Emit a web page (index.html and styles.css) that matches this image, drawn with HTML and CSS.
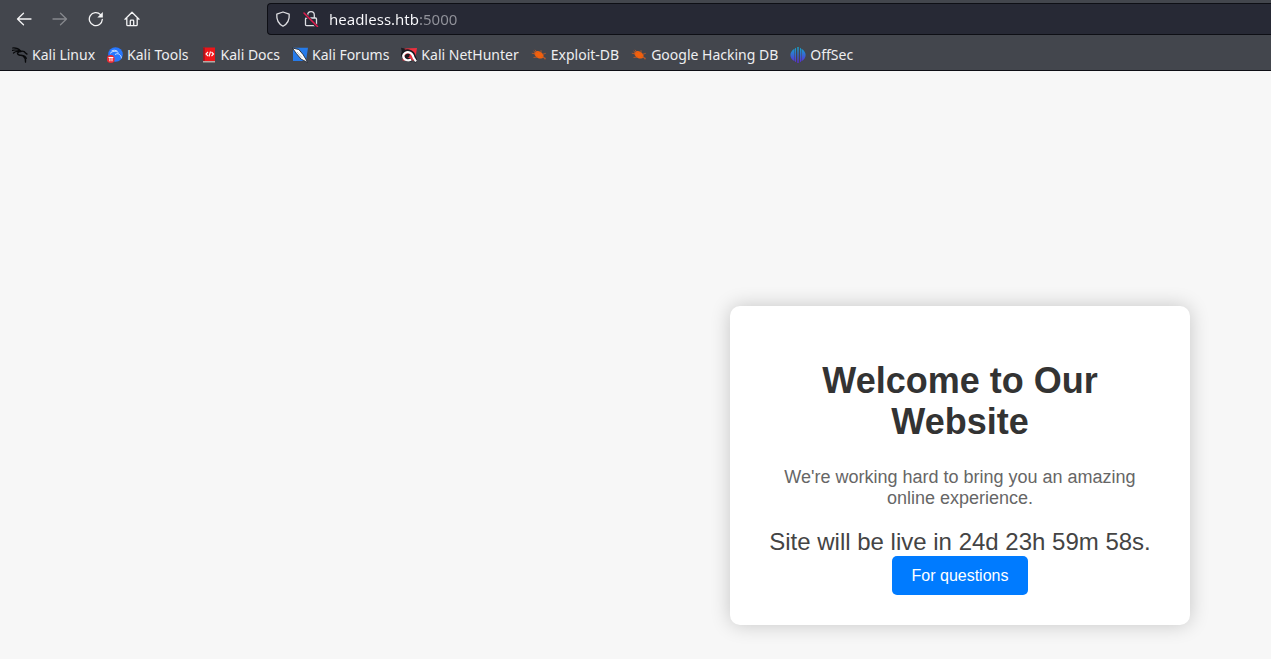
FILE: index.html
```html
<!DOCTYPE html>
<html lang="en">
<head>
<meta charset="utf-8">
<title>Under Construction</title>
<link rel="stylesheet" href="styles.css">
</head>
<body>
<header class="browser">
  <div class="toolbar">
    <div class="nav-buttons">
      <button class="nav-button" type="button" aria-label="Back"><svg viewBox="0 0 16 16"><path d="M15 8H1.5M7.500 2.200L1.500 8l6 5.800"/></svg></button>
      <button class="nav-button" type="button" aria-label="Forward" disabled><svg viewBox="0 0 16 16"><path d="M1 8h13.500M8.500 2.200l6 5.800-6 5.800"/></svg></button>
      <button class="nav-button" type="button" aria-label="Reload"><svg viewBox="0 0 16 16"><path d="M14.300 8.500A6.500 6.500 0 1 1 12.500 3.600"/><path class="solid" d="M14.800 1v5.500H9.300z"/></svg></button>
      <button class="nav-button" type="button" aria-label="Home"><svg viewBox="0 0 16 16"><path d="M1 8.300L8 1.300l7 7M2.800 7v6.700q0 1 1 1h8.400q1 0 1-1V7M6.300 14.500V10q0-.8.800-.8h1.800q.8 0 .8.800v4.500"/></svg></button>
    </div>
    <form class="address">
      <svg viewBox="0 0 16 16"><path d="M8 1l6.200 2.200c.4 5-1.200 9.300-6.200 12-5-2.700-6.600-7-6.200-12z"/></svg>
      <svg viewBox="0 0 16 16"><path d="M4.700 7V4a3.300 3.300 0 0 1 6.600 0v3M3.500 7h9q1 0 1 1v5.500q0 1.200-1.200 1.200H3.700q-1.200 0-1.200-1.200V8q0-1 1-1z"/><path class="gap" d="M1.500 2.500L14 15.500"/><path class="slash" d="M1 2l13.500 13.500"/></svg>
      <input class="address-input" type="text" aria-label="Address" value="headless.htb:5000">
    </form>
  </div>
  <nav class="bookmarks" aria-label="Bookmarks">
    <a class="bookmark" href="#"><svg viewBox="0 0 16 16"><g fill="none" stroke="#08090b" stroke-linecap="round"><path stroke-width="1.200" d="M.6 1c3.500-.3 6 .6 8 2.800M.4 3.400C3 2.500 5.500 3 8.500 4.300M1.500 6c1.500-1.300 3-1.700 5-1.500"/><path stroke-width="1.500" d="M9 4.500c-4 .2-4.400 2.800-1.800 3.400s6.300.2 7 3.600"/><path stroke-width="1.300" d="M9 4.300c2-.3 3.800.3 4.600 1.800l1.400 1M11.500 9.500c1.600 1.200 2.400 3 2 5.700"/></g></svg>Kali Linux</a>
    <a class="bookmark" href="#"><svg viewBox="0 0 16 16"><circle cx="8.500" cy="7.500" r="7.300" fill="#2777ff"/><path d="M3 6.500c2.500-2.500 5.500-3 8.500-.8M4.500 4c2-1 4-1 6 .3M8 7.500c2.500-1.500 4-.8 5.300.8 1 1.200 1 2 1.200 3" fill="none" stroke="#d5e6ff" stroke-width=".9"/><circle cx="3.800" cy="12" r="3.900" fill="#e92b33"/><path d="M1.500 10.500h4.800M2.900 10.500v3.800M5 10.500v3.800" stroke="#fff" fill="none"/></svg>Kali Tools</a>
    <a class="bookmark" href="#"><svg viewBox="0 0 16 16"><path d="M2 .5h12v13.700H2z" fill="#ee1519"/><path d="M2 .5h1.800v13.700H2z" fill="#9c1820"/><path d="M2 14h12v1.500H2z" fill="#b7aaa5"/><path d="M7 5L5 7l2 2M10.500 5l2 2-2 2M9.500 4.500L8 9.500" fill="none" stroke="#fff" stroke-width="1.100"/></svg>Kali Docs</a>
    <a class="bookmark" href="#"><svg viewBox="0 0 16 16"><path d="M1 .8h15L14 14H1z" fill="#267bea"/><path d="M.3 1l6.500 1.500 4.400 5.200L15.800 15.500l-6.600-3.300-4.700-5.500z" fill="#fff" stroke="#242831" stroke-width=".9"/><path d="M5 5l5 5.500" fill="none" stroke="#8b939b" stroke-width=".6"/></svg>Kali Forums</a>
    <a class="bookmark" href="#"><svg viewBox="0 0 16 16"><path d="M3 1.500L16 1l-2 12.500H1.500z" fill="#ed303e"/><path d="M0 .8l4.500 1L1 6z" fill="#1b1c22"/><path d="M8.500 8.500C6.500 8 4.500 9.300 5 11c.7 2 4 2.500 5.500 1.500" fill="none" stroke="#181a20" stroke-width="3.600"/><path d="M1 9.500C1.500 5 5 3.500 8 4.200c4 .8 5 4 5.500 6.500L15.500 15" fill="none" stroke="#181a20" stroke-width="3.500"/><path d="M2 9.500C2.500 6 5.500 4.800 8 5.300c3.200.7 4 3 4.500 5.200l2.500 4M2.200 9c.8 4.500 5 5 8 3.500" fill="none" stroke="#fff" stroke-width="2.200"/></svg>Kali NetHunter</a>
    <a class="bookmark" href="#"><svg viewBox="0 0 16 16"><ellipse cx="8" cy="7.800" rx="5" ry="3.300" transform="rotate(30 8 7.800)" fill="#f2600c"/><path d="M.8 6.200l4 .8M4 2.800l2.500 3M10 3.200v3M14.800 6.300L11 7.500M12.500 10l1.500 2.500M7 10l-4.500.5M10.500 9.500L15 11.500M2.500 4L5 6" fill="none" stroke="#c65b25" stroke-width=".8"/></svg>Exploit-DB</a>
    <a class="bookmark" href="#"><svg viewBox="0 0 16 16"><ellipse cx="8" cy="7.800" rx="5" ry="3.300" transform="rotate(30 8 7.800)" fill="#f2600c"/><path d="M.8 6.200l4 .8M4 2.800l2.500 3M10 3.200v3M14.800 6.300L11 7.500M12.500 10l1.500 2.500M7 10l-4.500.5M10.500 9.500L15 11.500M2.500 4L5 6" fill="none" stroke="#c65b25" stroke-width=".8"/></svg>Google Hacking DB</a>
    <a class="bookmark" href="#"><svg viewBox="0 0 16 16"><defs><linearGradient id="offsec" x1="0" y1="0" x2="0" y2="1"><stop stop-color="#12a9ce"/><stop offset="1" stop-color="#5b28d8"/></linearGradient></defs><path fill="url(#offsec)" d="M7.300 0h1.400v16H7.300zM6 .8v14.400l-1-.6V1.400zM4.500 1.700v12.600C-1 11-1 5 4.500 1.700zM10 .8v14.400l1-.6V1.400zM11.500 1.700v12.600c5.500-3.300 5.500-9.300 0-12.600z"/></svg>OffSec</a>
  </nav>
</header>
<main class="page">
  <section class="card">
    <h1 class="title">Welcome to Our Website</h1>
    <p class="lead">We're working hard to bring you an amazing online experience.</p>
    <div class="countdown">Site will be live in 24d 23h 59m 58s.</div>
    <button class="support" type="button">For questions</button>
  </section>
</main>
</body>
</html>
```
FILE: styles.css
```css
* {
  box-sizing: border-box;
}

body {
  margin: 0;
  min-height: 100vh;
  background: #f7f7f7;
  font-family: "Liberation Sans", Arial, sans-serif;
}

.browser {
  background: #43464d;
  border-bottom: 1px solid #0e0f15;
  font-family: "Noto Sans", sans-serif;
}

.toolbar {
  display: flex;
  align-items: center;
  padding-top: 3px;
}

.nav-buttons {
  display: flex;
  flex: none;
  gap: 4px;
  width: 267px;
  padding-left: 8px;
}

.nav-button {
  display: flex;
  align-items: center;
  justify-content: center;
  width: 32px;
  height: 32px;
  padding: 0;
  border: 0;
  background: none;
  color: #f4f4f5;
}

.nav-button:disabled {
  color: #86888d;
}

svg {
  flex: none;
  width: 16px;
  height: 16px;
}

.nav-button path,
.address path {
  fill: none;
  stroke: currentColor;
  stroke-width: 1.3;
  stroke-linecap: round;
  stroke-linejoin: round;
}

.nav-button .solid {
  fill: currentColor;
  stroke: none;
}

.address {
  display: flex;
  flex: 1;
  align-items: center;
  gap: 12px;
  height: 32px;
  padding-left: 7px;
  border: 1px solid #0e0f15;
  border-right: 0;
  border-radius: 4px 0 0 4px;
  background: #272935;
  color: #dfdfe3;
}

.address .gap {
  stroke: #272935;
  stroke-width: 3;
}

.address .slash {
  stroke: #e21b4d;
  stroke-width: 1.5;
}

.address-input {
  flex: 1;
  min-width: 0;
  margin-left: -2px;
  padding: 0;
  border: 0;
  outline: 0;
  background: linear-gradient(to right, #fbfbfe 90px, #92939b 90px);
  background-clip: text;
  -webkit-background-clip: text;
  color: transparent;
  font: 15px/20px "Noto Sans", sans-serif;
}

.bookmarks {
  display: flex;
  align-items: center;
  gap: 12px;
  height: 35px;
  padding: 4px 12px 0;
}

.bookmark {
  display: flex;
  align-items: center;
  gap: 4px;
  color: #eeeef0;
  font-size: 14px;
  line-height: 20px;
  text-decoration: none;
  white-space: nowrap;
}

.page {
  display: flex;
  justify-content: flex-end;
  padding: 235px 81px 34px;
}

.card {
  width: 460px;
  padding: 30px;
  border-radius: 10px;
  background: #fff;
  box-shadow: 0 0 20px rgba(0, 0, 0, 0.2);
  text-align: center;
}

.title {
  margin: 24px 0 25px;
  color: #333;
  font-size: 36px;
  line-height: 41px;
}

.lead {
  margin: 0 0 19px;
  color: #666;
  font-size: 18px;
  line-height: 21px;
}

.countdown {
  color: #444;
  font-size: 24px;
  line-height: 28px;
}

.support {
  padding: 10px 20px;
  border: 0;
  border-radius: 5px;
  background: #007bff;
  color: #fff;
  font: 16px/19px "Liberation Sans", Arial, sans-serif;
}
```
